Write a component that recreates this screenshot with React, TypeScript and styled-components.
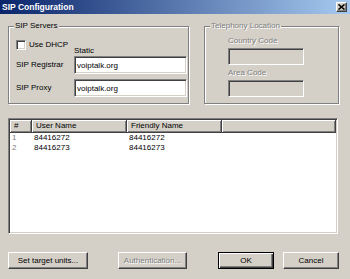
import React from 'react'
import styled, { createGlobalStyle } from 'styled-components'

const GlobalStyle = createGlobalStyle`
    html, body {
        margin: 0;
        padding: 0;
        background: #d4d0c8;
    }
    body {
        font-family: "Liberation Sans", Arial, sans-serif;
        font-size: 8px;
        color: #000;
    }
    * {
        box-sizing: border-box;
    }
`

const users = [
    { id: 1, name: '84416272', friendly: '84416272' },
    { id: 2, name: '84416273', friendly: '84416273' },
]

const App = () => {
    return (
        <Window>
            <GlobalStyle />
            <TitleBar>
                <span>SIP Configuration</span>
                <CloseButton>
                    <svg width="7" height="6" viewBox="0 0 7 6">
                        <path d="M0.5 0.5 L6.5 5.5 M6.5 0.5 L0.5 5.5" stroke="#000" strokeWidth="1.6" />
                    </svg>
                </CloseButton>
            </TitleBar>
            <Body>
                <TopRow>
                    <GroupBox $width={181}>
                        <GroupTitle>SIP Servers</GroupTitle>
                        <ServerContent>
                            <CheckLine>
                                <CheckLabel>
                                    <CheckBox />
                                    Use DHCP
                                </CheckLabel>
                                <Text>Static</Text>
                            </CheckLine>
                            <FieldGrid>
                                <Text>SIP Registrar</Text>
                                <TextBox>voiptalk.org</TextBox>
                                <Text>SIP Proxy</Text>
                                <TextBox>voiptalk.org</TextBox>
                            </FieldGrid>
                        </ServerContent>
                    </GroupBox>
                    <GroupBox $width={135}>
                        <GroupTitle $disabled>Telephony Location</GroupTitle>
                        <LocationContent>
                            <Text $disabled>Country Code</Text>
                            <TextBox $disabled $width={76} />
                            <Text $disabled $gap={3}>Area Code</Text>
                            <TextBox $disabled $width={76} />
                        </LocationContent>
                    </GroupBox>
                </TopRow>

                <ListView>
                    <HeaderRow>
                        <HeaderCell $width={22}>#</HeaderCell>
                        <HeaderCell $width={95}>User Name</HeaderCell>
                        <HeaderCell $width={95}>Friendly Name</HeaderCell>
                        <HeaderCell />
                    </HeaderRow>
                    {users.map(u => (
                        <ListRow key={u.id}>
                            <ListCell $width={22} $muted>{u.id}</ListCell>
                            <ListCell $width={95}>{u.name}</ListCell>
                            <ListCell $width={95}>{u.friendly}</ListCell>
                        </ListRow>
                    ))}
                </ListView>

                <ButtonRow>
                    <ButtonGroup $gap={30}>
                        <Button $width={80}>Set target units...</Button>
                        <Button $width={69} disabled>Authentication...</Button>
                    </ButtonGroup>
                    <ButtonGroup $gap={9}>
                        <Button $width={56} $default>OK</Button>
                        <Button $width={56}>Cancel</Button>
                    </ButtonGroup>
                </ButtonRow>
            </Body>
        </Window>
    )
}

const Window = styled.div`
    width: 350px;
    height: 279px;
    background: #d4d0c8;
    display: flex;
    flex-direction: column;
    overflow: hidden;
`

const TitleBar = styled.div`
    height: 14px;
    padding: 0 3px 0 2px;
    background: linear-gradient(to right, #0a246a, #a6caf0);
    color: #fff;
    font-weight: bold;
    font-size: 8.5px;

    display: flex;
    justify-content: space-between;
    align-items: center;
`

const CloseButton = styled.div`
    width: 11px;
    height: 10px;
    background: #d4d0c8;
    border: 1px solid;
    border-color: #fff #404040 #404040 #fff;
    box-shadow: inset -1px -1px #808080;

    display: flex;
    justify-content: center;
    align-items: center;
`

const Body = styled.div`
    flex: 1;
    padding: 7px 11px 0 8px;
    display: flex;
    flex-direction: column;
`

const TopRow = styled.div`
    display: flex;
    gap: 15px;
    height: 83px;
`

const GroupBox = styled.div<{ $width: number }>`
    width: ${p => p.$width}px;
    margin-top: 5px;
    height: 78px;
    border: 1px solid #808080;
    box-shadow: inset 1px 1px #fff, 1px 1px #fff;

    display: flex;
    flex-direction: column;
`

const GroupTitle = styled.span<{ $disabled?: boolean }>`
    align-self: flex-start;
    margin: -6px 0 0 5px;
    padding: 0 1px;
    line-height: 10px;
    background: #d4d0c8;
    color: ${p => (p.$disabled ? '#808080' : '#000')};
    text-shadow: ${p => (p.$disabled ? '1px 1px #fff' : 'none')};
`

const ServerContent = styled.div`
    padding: 7px 0 0 7px;
    display: flex;
    flex-direction: column;
`

const CheckLine = styled.div`
    height: 18px;
    display: grid;
    grid-template-columns: 58px 1fr;
    align-items: end;
`

const CheckLabel = styled.label`
    align-self: start;
    margin-top: 2px;
    display: flex;
    align-items: center;
    gap: 3px;
    line-height: 10px;
`

const CheckBox = styled.span`
    width: 10px;
    height: 10px;
    background: #fff;
    border: 1px solid;
    border-color: #808080 #fff #fff #808080;
    box-shadow: inset 1px 1px #404040, inset -1px -1px #d4d0c8;
`

const Text = styled.span<{ $disabled?: boolean; $gap?: number }>`
    line-height: 10px;
    margin-top: ${p => p.$gap ?? 0}px;
    color: ${p => (p.$disabled ? '#808080' : '#000')};
    text-shadow: ${p => (p.$disabled ? '1px 1px #fff' : 'none')};
`

const FieldGrid = styled.div`
    display: grid;
    grid-template-columns: 58px 113px;
    grid-auto-rows: 18px;
    row-gap: 5px;
    align-items: center;
`

const TextBox = styled.div<{ $disabled?: boolean; $width?: number }>`
    width: ${p => (p.$width ? `${p.$width}px` : 'auto')};
    height: ${p => (p.$disabled ? 17 : 18)}px;
    margin-top: ${p => (p.$disabled ? 2 : 0)}px;
    padding: 0 2px;
    background: ${p => (p.$disabled ? '#d4d0c8' : '#fff')};
    border: 1px solid;
    border-color: #808080 #fff #fff #808080;
    box-shadow: inset 1px 1px #404040, inset -1px -1px #d4d0c8;

    display: flex;
    align-items: center;
`

const LocationContent = styled.div`
    padding: 5px 0 0 23px;
    display: flex;
    flex-direction: column;
    align-items: flex-start;
`

const ListView = styled.div`
    margin-top: 14px;
    width: 330px;
    height: 116px;
    background: #fff;
    border: 1px solid;
    border-color: #808080 #fff #fff #808080;
    box-shadow: inset 1px 1px #404040, inset -1px -1px #d4d0c8;
    padding: 1px;
    display: flex;
    flex-direction: column;
`

const HeaderRow = styled.div`
    height: 13px;
    display: flex;
    flex-shrink: 0;
`

const HeaderCell = styled.div<{ $width?: number }>`
    ${p => (p.$width ? `width: ${p.$width}px;` : 'flex: 1;')}
    height: 13px;
    padding-left: 4px;
    line-height: 11px;
    background: #d4d0c8;
    border-right: 1px solid #404040;
    border-bottom: 1px solid #404040;
    box-shadow: inset 1px 1px #fff, inset -1px -1px #808080;
    white-space: nowrap;
`

const ListRow = styled.div`
    height: 10px;
    display: flex;
`

const ListCell = styled.div<{ $width: number; $muted?: boolean }>`
    width: ${p => p.$width}px;
    padding-left: 2px;
    line-height: 10px;
    color: ${p => (p.$muted ? '#808080' : '#000')};
`

const ButtonRow = styled.div`
    margin-top: 18px;
    display: flex;
    justify-content: space-between;
`

const ButtonGroup = styled.div<{ $gap: number }>`
    display: flex;
    gap: ${p => p.$gap}px;
`

const Button = styled.button<{ $width: number; $default?: boolean }>`
    width: ${p => p.$width}px;
    height: 17px;
    padding: 0;
    font-family: inherit;
    font-size: 8px;
    color: #000;
    background: #d4d0c8;
    border: 1px solid;
    border-color: ${p => (p.$default ? '#000' : '#fff #404040 #404040 #fff')};
    box-shadow: ${p =>
        p.$default
            ? 'inset 1px 1px #fff, inset -1px -1px #404040, inset -2px -2px #808080'
            : 'inset -1px -1px #808080'};

    &:disabled {
        color: #808080;
        text-shadow: 1px 1px #fff;
    }
`

export default App
